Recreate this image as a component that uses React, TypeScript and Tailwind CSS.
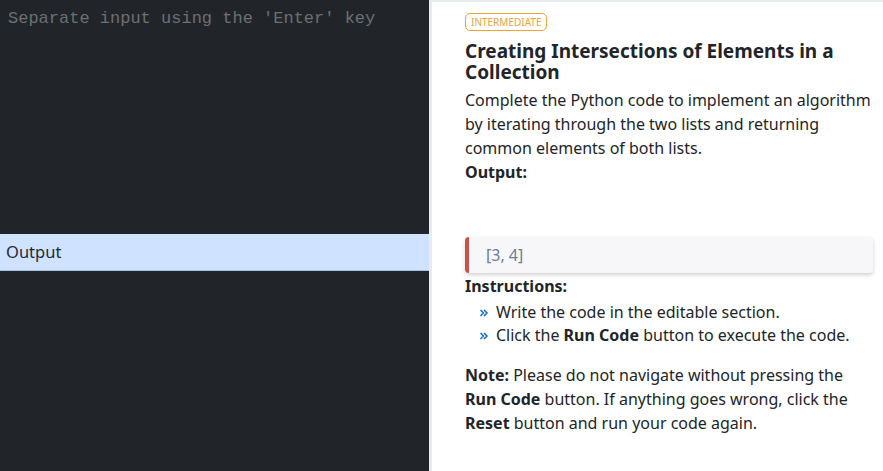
import { ChevronsRight } from 'lucide-react';

const SANS = "font-['Segoe_UI','Noto_Sans','Open_Sans',sans-serif]";

export default function App() {
  return (
    <div className={`flex h-[471px] w-[883px] overflow-hidden ${SANS}`}>
      <div className="flex w-[429px] flex-col bg-[#212529]">
        <div className="h-[234px] px-2 pt-[9px] font-['Liberation_Mono',monospace] text-[17px] leading-[19px] text-[#6c6f73]">
          Separate input using the 'Enter' key
        </div>
        <div className="flex h-[37px] items-center border-b border-[#a9bfe0] bg-[#cfe2ff] px-[6px] text-[16.5px] text-[#1f2a3a]">
          Output
        </div>
        <div className="flex-1" />
      </div>
      <div className="w-[3px] bg-[#e9ecef]" />
      <div className="flex-1 border-t-2 border-[#e9ecef] bg-white pl-[33px] pr-[10px] pt-[11px] text-[#212529]">
        <div className="flex">
          <span className="rounded-[5px] border border-[#e8a33a] px-[5px] text-[10px] leading-[16px] text-[#e8a33a]">
            INTERMEDIATE
          </span>
        </div>
        <h1 className="mt-[10px] text-[19px] font-bold leading-[21px]">
          Creating Intersections of Elements in a Collection
        </h1>
        <p className="mt-[5px] text-[16px] leading-[24px]">
          Complete the Python code to implement an algorithm by iterating through the two lists and returning common elements of both lists.
        </p>
        <div className="text-[16px] font-bold leading-[24px]">Output:</div>
        <div className="mt-[53px] flex h-[36px] items-center rounded-[4px] border-l-4 border-[#c9514a] bg-[#f7f7f9] pl-[17px] text-[16px] text-[#6c7f93] shadow-[0_2px_4px_rgba(0,0,0,0.18)]">
          [3, 4]
        </div>
        <div className="mt-[1px] text-[16px] font-bold leading-[24px]">Instructions:</div>
        <ul className="mt-[3px] pl-[13px] text-[16px] leading-[23px]">
          <li className="flex items-center gap-[6px]">
            <ChevronsRight size={12} strokeWidth={3.5} className="text-[#1a73c8]" />
            Write the code in the editable section.
          </li>
          <li className="flex items-center gap-[6px]">
            <ChevronsRight size={12} strokeWidth={3.5} className="text-[#1a73c8]" />
            <span>Click the <b>Run Code</b> button to execute the code.</span>
          </li>
        </ul>
        <p className="mt-[16px] text-[16px] leading-[24px]">
          <b>Note:</b> Please do not navigate without pressing the <b>Run Code</b> button. If anything goes wrong, click the <b>Reset</b> button and run your code again.
        </p>
      </div>
    </div>
  );
}
